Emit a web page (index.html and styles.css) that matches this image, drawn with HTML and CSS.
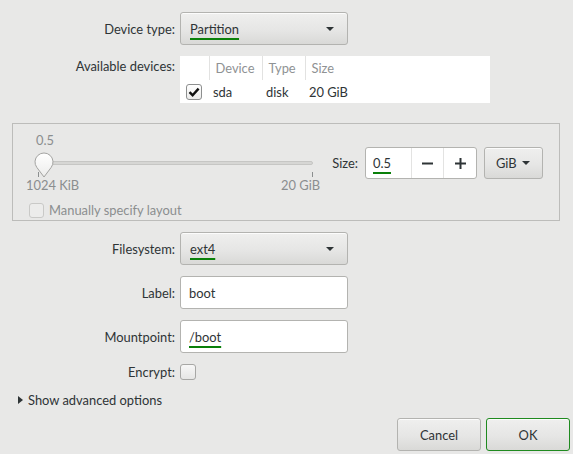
FILE: index.html
```html
<!DOCTYPE html>
<html>
<head>
<meta charset="utf-8">
<link rel="stylesheet" href="styles.css">
</head>
<body>
<div class="dialog">
  <div class="form form-top">
    <div class="lbl">Device type:</div>
    <div class="btn combo"><span class="mn">Partition</span><span class="arrow"></span></div>
    <div class="lbl lbl-devices">Available devices:</div>
    <table class="devices">
      <colgroup><col class="w-check"><col class="w-dev"><col class="w-type"><col class="w-size"></colgroup>
      <thead>
        <tr><th></th><th>Device</th><th>Type</th><th class="last">Size</th></tr>
      </thead>
      <tbody>
        <tr>
          <td class="c-check"><span class="cb cb-checked"><svg width="12" height="10" viewBox="0 0 12 10"><path d="M1.5 5.2 L4.6 8.2 L10.6 1.6" fill="none" stroke="#111" stroke-width="2.4" stroke-linejoin="miter"/></svg></span></td>
          <td>sda</td><td>disk</td><td>20 GiB</td>
        </tr>
      </tbody>
    </table>
  </div>

  <div class="frame">
    <div class="slider-area">
      <div class="slider-value">0.5</div>
      <div class="slider">
        <div class="trough"></div>
        <svg class="knob" width="20" height="26" viewBox="0 0 20 26">
          <defs><linearGradient id="kg" x1="0" y1="0" x2="0" y2="1"><stop offset="0" stop-color="#ffffff"/><stop offset="1" stop-color="#ececeb"/></linearGradient></defs>
          <path d="M2.8 15.4 A9 9 0 1 1 17.2 15.4 L10 25 Z" fill="url(#kg)" stroke="#a3a3a1" stroke-width="1"/>
        </svg>
        <span class="tick tick-start"></span>
        <span class="tick tick-end"></span>
      </div>
      <div class="marks"><span>1024 KiB</span><span>20 GiB</span></div>
      <div class="check disabled"><span class="cb cb-disabled"></span><span>Manually specify layout</span></div>
    </div>
    <div class="size-area">
      <span class="size-lbl">Size:</span>
      <div class="spin">
        <span class="spin-text"><span class="mn">0.5</span></span>
        <span class="spin-btn"><svg width="11" height="11" viewBox="0 0 11 11"><rect x="0" y="4.5" width="11" height="2" fill="#2e3436"/></svg></span>
        <span class="spin-btn"><svg width="11" height="11" viewBox="0 0 11 11"><rect x="0" y="4.5" width="11" height="2" fill="#2e3436"/><rect x="4.5" y="0" width="2" height="11" fill="#2e3436"/></svg></span>
      </div>
      <div class="btn unit"><span>GiB</span><span class="arrow"></span></div>
    </div>
  </div>

  <div class="form form-bottom">
    <div class="lbl">Filesystem:</div>
    <div class="btn combo"><span class="mn">ext4</span><span class="arrow"></span></div>
    <div class="lbl">Label:</div>
    <div class="entry">boot</div>
    <div class="lbl">Mountpoint:</div>
    <div class="entry"><span class="mn">/boot</span></div>
    <div class="lbl">Encrypt:</div>
    <div class="encrypt"><span class="cb cb-plain"></span></div>
  </div>

  <div class="expander"><span class="tri"></span>Show advanced options</div>

  <div class="actions">
    <div class="btn action">Cancel</div>
    <div class="btn action ok">OK</div>
  </div>
</div>
</body>
</html>
```

FILE: styles.css
```css
html, body {
  margin: 0;
  padding: 0;
}
body {
  background: #e8e8e7;
  font-family: Lato, "Open Sans", "DejaVu Sans", sans-serif;
  font-size: 12.9px;
  line-height: 16px;
  color: #2e3436;
  width: 573px;
  height: 454px;
  overflow: hidden;
}
.dialog {
  display: flex;
  flex-direction: column;
}

/* form grids */
.form {
  display: grid;
  grid-template-columns: 175px auto;
  column-gap: 5px;
  align-items: center;
  justify-items: start;
}
.form-top {
  padding-top: 12px;
  row-gap: 11px;
}
.form-bottom {
  margin-top: 11px;
  row-gap: 11px;
}
.lbl {
  justify-self: end;
  text-align: right;
}
.lbl-devices {
  align-self: start;
  margin-top: 2px;
}

/* green mnemonic underline */
.mn {
  text-decoration: underline;
  text-decoration-color: #0a800a;
  text-decoration-thickness: 2px;
  text-underline-offset: 4px;
}

/* buttons */
.btn {
  box-sizing: border-box;
  border: 1px solid #b3b3b0;
  border-radius: 3px;
  background: linear-gradient(#efefee, #e6e6e5 55%, #d9d9d7);
  box-shadow: inset 0 1px rgba(255, 255, 255, 0.8);
  display: flex;
  align-items: center;
}
.combo {
  width: 168px;
  height: 33px;
  justify-content: space-between;
  padding: 0 13px 0 9px;
}
.arrow {
  width: 0;
  height: 0;
  border-left: 4px solid transparent;
  border-right: 4px solid transparent;
  border-top: 4px solid #2e3436;
}

/* devices table */
.devices {
  width: 310px;
  height: 47px;
  background: #ffffff;
  border-collapse: collapse;
  border-spacing: 0;
  table-layout: fixed;
}
.w-check { width: 29px; }
.w-dev { width: 53px; }
.w-type { width: 43px; }
.w-size { width: 185px; }
.devices th {
  height: 24px;
  padding: 0 0 0 6px;
  text-align: left;
  font-weight: normal;
  color: #8f9294;
  border-right: 1px solid #e2e2e1;
  box-sizing: border-box;
}
.devices th.last {
  border-right: none;
}
.devices td {
  height: 23px;
  padding: 0 0 0 4px;
  text-align: left;
}
.devices td.c-check {
  padding-left: 6px;
}

/* check boxes */
.cb {
  box-sizing: border-box;
  display: flex;
  align-items: center;
  justify-content: center;
  border-radius: 3px;
}
.cb-checked {
  width: 16px;
  height: 16px;
  border: 1px solid #8d8f8f;
  background: linear-gradient(#ffffff, #ececeb);
}
.cb-plain {
  width: 16px;
  height: 16px;
  border: 1px solid #a7a7a5;
  background: linear-gradient(#f7f7f7, #e6e6e5);
}
.cb-disabled {
  width: 15px;
  height: 15px;
  border: 1px solid #c9c9c7;
  background: #ececeb;
}

/* frame */
.frame {
  box-sizing: border-box;
  margin: 20px 13px 0 12px;
  height: 98px;
  border: 1px solid #bcbcba;
  display: flex;
  align-items: flex-start;
}
.slider-area {
  padding-top: 8px;
  width: 312px;
}
.slider-value {
  padding-left: 23px;
  color: #8b8e8f;
}
.slider {
  position: relative;
  margin-left: 21px;
  width: 279px;
  height: 30px;
}
.trough {
  position: absolute;
  left: 9px;
  top: 13px;
  width: 270px;
  height: 4px;
  box-sizing: border-box;
  border: 1px solid #c6c6c4;
  border-radius: 2px;
  background: #d6d6d4;
}
.knob {
  position: absolute;
  left: 0;
  top: 4px;
}
.tick {
  position: absolute;
  top: 24px;
  width: 1px;
  height: 5px;
  background: #8b8e8f;
}
.tick-start {
  left: 4px;
}
.tick-end {
  left: 278px;
}
.marks {
  box-sizing: border-box;
  width: 307px;
  padding-left: 13px;
  margin-top: -1px;
  display: flex;
  justify-content: space-between;
  color: #8b8e8f;
}
.check {
  display: flex;
  align-items: center;
  gap: 5px;
  padding-left: 16px;
  margin-top: 9px;
}
.disabled {
  color: #8b8e8f;
}

.size-area {
  margin-top: 23px;
  margin-left: auto;
  margin-right: 16px;
  display: flex;
  align-items: center;
  gap: 7px;
  height: 32px;
}
.spin {
  box-sizing: border-box;
  height: 32px;
  width: 112px;
  display: flex;
  background: #ffffff;
  border: 1px solid #b3b3b0;
  border-radius: 3px;
}
.spin-text {
  width: 45px;
  padding-left: 7px;
  box-sizing: border-box;
  display: flex;
  align-items: center;
}
.spin-btn {
  width: 33px;
  display: flex;
  align-items: center;
  justify-content: center;
  border-left: 1px solid #e3e3e2;
  box-sizing: border-box;
}
.unit {
  width: 59px;
  height: 32px;
  padding: 0 12px 0 11px;
  justify-content: space-between;
}

/* entries */
.entry {
  box-sizing: border-box;
  width: 168px;
  height: 33px;
  background: #ffffff;
  border: 1px solid #b3b3b0;
  border-radius: 3px;
  padding-left: 8px;
  display: flex;
  align-items: center;
}
.encrypt {
  height: 16px;
}

/* expander */
.expander {
  margin-top: 12px;
  padding-left: 18px;
  display: flex;
  align-items: center;
}
.tri {
  width: 0;
  height: 0;
  border-top: 4px solid transparent;
  border-bottom: 4px solid transparent;
  border-left: 5px solid #2e3436;
  margin-right: 5px;
}

/* actions */
.actions {
  margin-top: 10px;
  display: flex;
  justify-content: flex-end;
  gap: 5px;
  padding-right: 3px;
}
.action {
  width: 84px;
  height: 33px;
  justify-content: center;
}
.ok {
  border-color: #1f8a1f;
}
```
